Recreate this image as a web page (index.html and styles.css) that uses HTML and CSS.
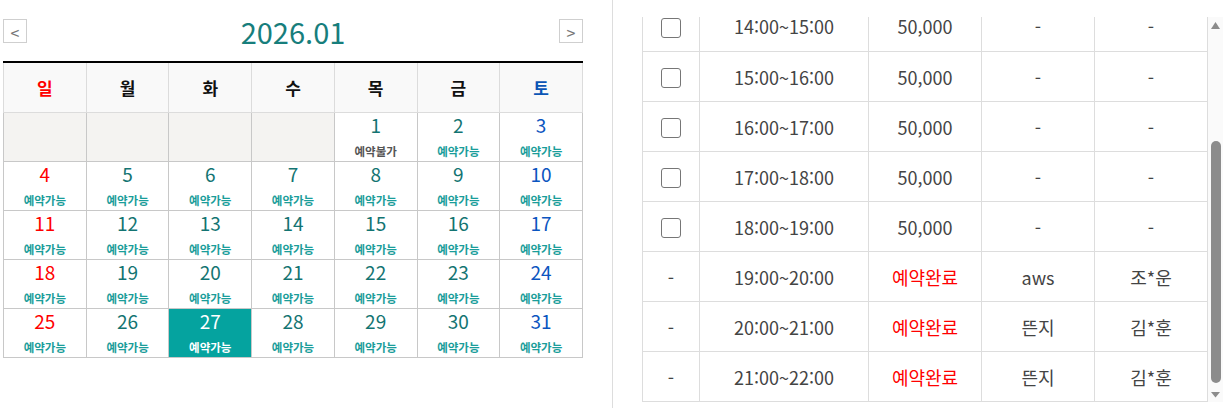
FILE: index.html
```html
<!DOCTYPE html>
<html lang="ko">
<head>
<meta charset="utf-8">
<title>예약</title>
<link rel="stylesheet" href="styles.css">
</head>
<body>
<div class="page">
  <section class="cal-panel">
    <div class="cal-head">
      <span class="nav">&lt;</span>
      <h2 class="month">2026.01</h2>
      <span class="nav">&gt;</span>
    </div>
    <table class="cal">
      <thead>
        <tr>
          <th class="sun">일</th><th>월</th><th>화</th><th>수</th><th>목</th><th>금</th><th class="sat">토</th>
        </tr>
      </thead>
      <tbody>
        <tr>
          <td class="empty"></td><td class="empty"></td><td class="empty"></td><td class="empty"></td>
          <td><span class="num">1</span><span class="st off">예약불가</span></td>
          <td><span class="num">2</span><span class="st">예약가능</span></td>
          <td class="sat"><span class="num">3</span><span class="st">예약가능</span></td>
        </tr>
        <tr>
          <td class="sun"><span class="num">4</span><span class="st">예약가능</span></td>
          <td><span class="num">5</span><span class="st">예약가능</span></td>
          <td><span class="num">6</span><span class="st">예약가능</span></td>
          <td><span class="num">7</span><span class="st">예약가능</span></td>
          <td><span class="num">8</span><span class="st">예약가능</span></td>
          <td><span class="num">9</span><span class="st">예약가능</span></td>
          <td class="sat"><span class="num">10</span><span class="st">예약가능</span></td>
        </tr>
        <tr>
          <td class="sun"><span class="num">11</span><span class="st">예약가능</span></td>
          <td><span class="num">12</span><span class="st">예약가능</span></td>
          <td><span class="num">13</span><span class="st">예약가능</span></td>
          <td><span class="num">14</span><span class="st">예약가능</span></td>
          <td><span class="num">15</span><span class="st">예약가능</span></td>
          <td><span class="num">16</span><span class="st">예약가능</span></td>
          <td class="sat"><span class="num">17</span><span class="st">예약가능</span></td>
        </tr>
        <tr>
          <td class="sun"><span class="num">18</span><span class="st">예약가능</span></td>
          <td><span class="num">19</span><span class="st">예약가능</span></td>
          <td><span class="num">20</span><span class="st">예약가능</span></td>
          <td><span class="num">21</span><span class="st">예약가능</span></td>
          <td><span class="num">22</span><span class="st">예약가능</span></td>
          <td><span class="num">23</span><span class="st">예약가능</span></td>
          <td class="sat"><span class="num">24</span><span class="st">예약가능</span></td>
        </tr>
        <tr>
          <td class="sun"><span class="num">25</span><span class="st">예약가능</span></td>
          <td><span class="num">26</span><span class="st">예약가능</span></td>
          <td class="selected"><span class="num">27</span><span class="st">예약가능</span></td>
          <td><span class="num">28</span><span class="st">예약가능</span></td>
          <td><span class="num">29</span><span class="st">예약가능</span></td>
          <td><span class="num">30</span><span class="st">예약가능</span></td>
          <td class="sat"><span class="num">31</span><span class="st">예약가능</span></td>
        </tr>
      </tbody>
    </table>
  </section>

  <section class="slot-panel">
    <div class="slots">
      <div class="viewport">
        <table class="slot-table">
          <colgroup>
            <col class="c-chk"><col class="c-time"><col class="c-price"><col class="c-org"><col class="c-name">
          </colgroup>
          <tbody>
            <tr><td><input class="chk" type="checkbox"></td><td>14:00~15:00</td><td>50,000</td><td>-</td><td>-</td></tr>
            <tr><td><input class="chk" type="checkbox"></td><td>15:00~16:00</td><td>50,000</td><td>-</td><td>-</td></tr>
            <tr><td><input class="chk" type="checkbox"></td><td>16:00~17:00</td><td>50,000</td><td>-</td><td>-</td></tr>
            <tr><td><input class="chk" type="checkbox"></td><td>17:00~18:00</td><td>50,000</td><td>-</td><td>-</td></tr>
            <tr><td><input class="chk" type="checkbox"></td><td>18:00~19:00</td><td>50,000</td><td>-</td><td>-</td></tr>
            <tr><td>-</td><td>19:00~20:00</td><td class="done">예약완료</td><td>aws</td><td>조*운</td></tr>
            <tr><td>-</td><td>20:00~21:00</td><td class="done">예약완료</td><td>뜬지</td><td>김*훈</td></tr>
            <tr><td>-</td><td>21:00~22:00</td><td class="done">예약완료</td><td>뜬지</td><td>김*훈</td></tr>
          </tbody>
        </table>
      </div>
      <div class="sbar" aria-hidden="true">
        <svg class="arrow" width="15" height="15" viewBox="0 0 15 15"><path d="M3 12H12L7.5 5Z" fill="#8c8c8c"/></svg>
        <div class="track"><div class="thumb"></div></div>
        <svg class="arrow" width="15" height="15" viewBox="0 0 15 15"><path d="M3 5H12L7.5 10.5Z" fill="#8c8c8c"/></svg>
      </div>
    </div>
  </section>
</div>
</body>
</html>
```

FILE: styles.css
```css
* { box-sizing: border-box; }
html, body { margin: 0; padding: 0; background: #fff; }
body {
  font-family: "Noto Sans CJK KR", "Noto Sans", sans-serif;
  color: #333;
}
.page { display: flex; height: 408px; overflow: hidden; }

/* ---------- calendar ---------- */
.cal-panel { width: 612px; flex: none; padding: 19px 0 0 3px; }
.cal-head {
  width: 580px; height: 24px; margin-bottom: 18px;
  display: flex; align-items: center; justify-content: space-between;
}
.nav {
  flex: none; width: 24px; height: 24px; padding-top: 1px;
  border: 1px solid #cfcfcf; background: #fff; color: #777;
  font-size: 16px; line-height: 1;
  display: flex; align-items: center; justify-content: center;
}
.month {
  margin: 0; font-size: 29px; font-weight: 400; line-height: 24px;
  color: #177e7c;
}
.cal {
  width: 580px; table-layout: fixed; border-collapse: collapse;
  border-top: 2px solid #000;
}
.cal th {
  height: 50px; padding: 0;
  background: #f9f9f9; border: 1px solid #dcdcdc;
  font-size: 17px; font-weight: 700; color: #111;
}
.cal th.sun { color: #f00; }
.cal th.sat { color: #0b55b5; }
.cal td {
  height: 49px; padding: 0; text-align: center; vertical-align: top;
  border: 1px solid #c8c8c8;
}
.cal td.empty { background: #f4f3f1; }
.num {
  display: block; padding-top: 1px;
  font-size: 19px; line-height: 22px; color: #137472;
}
.st {
  display: block; margin-top: 8px;
  font-size: 11.5px; line-height: 14px; font-weight: 700; color: #1a9d9a;
}
.st.off { color: #555; }
.cal td.sun .num { color: #f00; }
.cal td.sat .num { color: #0b55c0; }
.cal td.selected { background: #05a39f; }
.cal td.selected .num, .cal td.selected .st { color: #fff; }

/* ---------- time slots ---------- */
.slot-panel {
  flex: 1; border-left: 1px solid #dddddd;
  padding: 17px 0 0 29px;
}
.slots { display: flex; width: 581px; height: 385px; }
.viewport {
  width: 566px; flex: none; overflow: hidden;
  display: flex; flex-direction: column-reverse;
}
.sbar {
  width: 15px; flex: none; background: #fafafa;
  display: flex; flex-direction: column;
}
.arrow { display: block; flex: none; }
.track {
  flex: 1; display: flex; flex-direction: column; justify-content: flex-end;
  padding: 0 2px 4px 3px;
}
.thumb { height: 242px; background: #8c8c8c; border-radius: 5px; }

.slot-table {
  flex: none; width: 566px; table-layout: fixed; border-collapse: collapse;
  font-size: 18px; color: #444;
}
.c-chk { width: 57px; }
.c-time { width: 169px; }
.c-price { width: 113px; }
.c-org { width: 113px; }
.c-name { width: 113px; }
.slot-table td {
  height: 50px; padding: 0; text-align: center;
  border: 1px solid #dddddd;
}
.slot-table tr:first-child td { border-top: 0; }
.slot-table td.done { color: #f00; }
.chk {
  appearance: none; -webkit-appearance: none;
  width: 20px; height: 20px; margin: -3px 0 0; vertical-align: middle;
  border: 1px solid #767676; border-radius: 3px; background: #fff;
}
```
